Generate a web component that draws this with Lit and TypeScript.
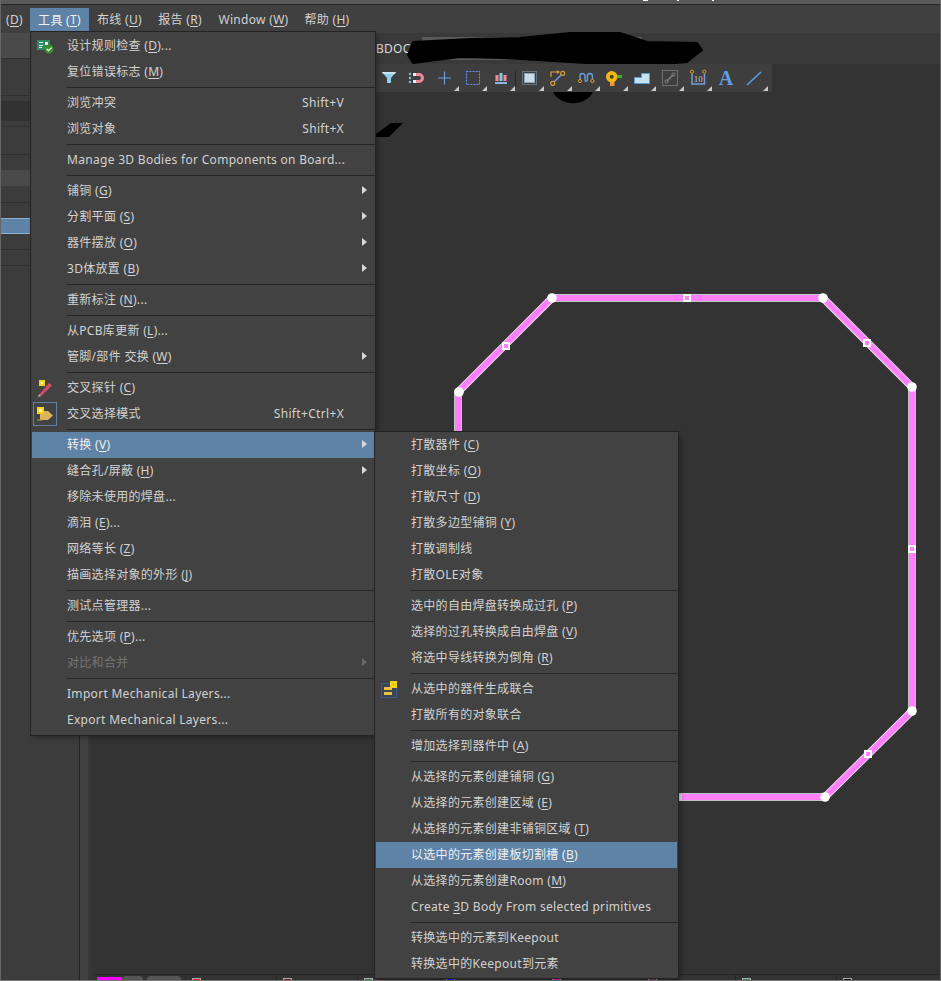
import { LitElement, html, css, svg } from 'lit';
import { customElement } from 'lit/decorators.js';

type Entry = {
  t?: string;
  key?: string;
  bare?: boolean;
  tail?: string;
  sc?: string;
  sub?: boolean;
  dis?: boolean;
  hi?: boolean;
  icon?: string;
  sep?: boolean;
};

const S: Entry = { sep: true };

const mainMenu: Entry[] = [
  { t: '设计规则检查 ', key: 'D', tail: '...', icon: 'drc' },
  { t: '复位错误标志 ', key: 'M' },
  S,
  { t: '浏览冲突', sc: 'Shift+V' },
  { t: '浏览对象', sc: 'Shift+X' },
  S,
  { t: 'Manage 3D Bodies for Components on Board...' },
  S,
  { t: '铺铜 ', key: 'G', sub: true },
  { t: '分割平面 ', key: 'S', sub: true },
  { t: '器件摆放 ', key: 'O', sub: true },
  { t: '3D体放置 ', key: 'B', sub: true },
  S,
  { t: '重新标注 ', key: 'N', tail: '...' },
  S,
  { t: '从PCB库更新 ', key: 'L', tail: '...' },
  { t: '管脚/部件 交换 ', key: 'W', sub: true },
  S,
  { t: '交叉探针 ', key: 'C', icon: 'probe' },
  { t: '交叉选择模式', sc: 'Shift+Ctrl+X', icon: 'cross' },
  S,
  { t: '转换 ', key: 'V', sub: true, hi: true },
  { t: '缝合孔/屏蔽 ', key: 'H', sub: true },
  { t: '移除未使用的焊盘...' },
  { t: '滴泪 ', key: 'E', tail: '...' },
  { t: '网络等长 ', key: 'Z' },
  { t: '描画选择对象的外形 ', key: 'J' },
  S,
  { t: '测试点管理器...' },
  S,
  { t: '优先选项 ', key: 'P', tail: '...' },
  { t: '对比和合并', sub: true, dis: true },
  S,
  { t: 'Import Mechanical Layers...' },
  { t: 'Export Mechanical Layers...' },
];

const subMenu: Entry[] = [
  { t: '打散器件 ', key: 'C' },
  { t: '打散坐标 ', key: 'O' },
  { t: '打散尺寸 ', key: 'D' },
  { t: '打散多边型铺铜 ', key: 'Y' },
  { t: '打散调制线' },
  { t: '打散OLE对象' },
  S,
  { t: '选中的自由焊盘转换成过孔 ', key: 'P' },
  { t: '选择的过孔转换成自由焊盘 ', key: 'V' },
  { t: '将选中导线转换为倒角 ', key: 'R' },
  S,
  { t: '从选中的器件生成联合', icon: 'union' },
  { t: '打散所有的对象联合' },
  S,
  { t: '增加选择到器件中 ', key: 'A' },
  S,
  { t: '从选择的元素创建铺铜 ', key: 'G' },
  { t: '从选择的元素创建区域 ', key: 'E' },
  { t: '从选择的元素创建非铺铜区域 ', key: 'T' },
  { t: '以选中的元素创建板切割槽 ', key: 'B', hi: true },
  { t: '从选择的元素创建Room ', key: 'M' },
  { t: 'Create ', key: '3', bare: true, tail: 'D Body From selected primitives' },
  S,
  { t: '转换选中的元素到Keepout' },
  { t: '转换选中的Keepout到元素' },
];

const menuBar = [
  { t: '工具 ', key: 'T', w: 59, on: true },
  { t: '布线 ', key: 'U', w: 61 },
  { t: '报告 ', key: 'R', w: 60 },
  { t: 'Window ', key: 'W', w: 87 },
  { t: '帮助 ', key: 'H', w: 60 },
];

// rows of the cut-off panel on the left, heights in px
const panelRows = [
  { h: 26, c: 'lt' },
  { h: 37, c: '' },
  { h: 5, c: 'flat' },
  { h: 20, c: 'dk' },
  { h: 6, c: '' },
  { h: 28, c: '' },
  { h: 15, c: 'flat' },
  { h: 16, c: 'lt flat' },
  { h: 17, c: '' },
  { h: 15, c: 'flat' },
  { h: 16, c: 'sel' },
  { h: 16, c: '' },
  { h: 16, c: '' },
];

const layers = [
  { c: '#f01c14', t: '[1] Top Layer', w: 91 },
  { c: '#8c1a1a', t: '[2] GND02', w: 81 },
  { c: '#1d9a2a', t: '[3] PWR03', w: 82 },
  { c: '#2222dd', t: '[4] Bottom Layer', w: 106 },
  { c: '#e21fd0', t: 'Mechanical 1', w: 96 },
  { c: '#8e1f9c', t: 'Mechanical 13', w: 94 },
  { c: '#1c9a2f', t: 'Mechanical 15', w: 101 },
  { c: '#111111', t: 'Mechanical 16', w: 99 },
];

// small corner triangle used on toolbar buttons with a dropdown
const drop = svg`<path d="M28 27h-5l5-5z" fill="#c8c8c8"/>`;

const tools1 = [
  svg`<path d="M7 8h14l-5 6v5h-4v-5z" fill="#8fd0ee"/><path d="M7 8h14l-1 2H8z" fill="#c6e8f6"/>`,
  svg`<path d="M11 9h5a5 5 0 0 1 0 10h-5v-3h5a2 2 0 0 0 0-4h-5z" fill="#ee8a96"/><path d="M10 9h3v3h-3zM10 16h3v3h-3z" fill="#e6edf2"/><circle cx="7" cy="10" r="1.200" fill="#8db8c8"/><circle cx="7" cy="14" r="1.200" fill="#8db8c8"/><circle cx="7" cy="18" r="1.200" fill="#8db8c8"/>`,
  svg`<path d="M13.500 7.500v13M7 14h13" stroke="#6c9ee0" stroke-width="1.100" fill="none"/>${drop}`,
  svg`<rect x="7.500" y="7.500" width="13" height="13" fill="none" stroke="#5f8fe8" stroke-width="1.100" stroke-dasharray="2 1"/>${drop}`,
  svg`<path d="M8.500 11h3v6h-3zM16.500 11h3v6h-3z" fill="#ee8d96"/><path d="M12.500 9h3v8h-3z" fill="#8cc4e8"/><path d="M8 18h12v2H8z" fill="#8cb4e0"/>${drop}`,
];

const tools2 = [
  svg`<rect x="8.500" y="9.500" width="10" height="9" fill="#c9dbe6" stroke="#8fa7b8"/><rect x="6.500" y="7.500" width="14" height="13" fill="none" stroke="#8fa7b8" stroke-dasharray="1 1"/>${drop}`,
  svg`<path d="M7 13V8h7" fill="none" stroke="#e0a030" stroke-width="1.200"/><path d="M13 6l3 2-3 2z" fill="#e0a030"/><path d="M10 18l7-7" stroke="#6c9ee0" stroke-width="1.400"/><circle cx="8.700" cy="19.300" r="2" fill="none" stroke="#d9a030" stroke-width="1.200"/><circle cx="18.700" cy="9.300" r="2" fill="none" stroke="#d9a030" stroke-width="1.200"/>${drop}`,
  svg`<path d="M8 15v-3a2.500 2.500 0 0 1 5 0v4a1.200 1.200 0 0 0 2.400 0v-4a2.500 2.500 0 0 1 5 0v3" fill="none" stroke="#6c9ee0" stroke-width="1.400"/><circle cx="8" cy="17" r="1.600" fill="none" stroke="#d9a030"/><circle cx="20.400" cy="17" r="1.600" fill="none" stroke="#d9a030"/>${drop}`,
  svg`<path d="M10 16h4.500v6H10z" fill="#e79a3a"/><circle cx="11.700" cy="12.700" r="5.700" fill="#f2b90f"/><circle cx="11.700" cy="12.700" r="2" fill="#4a4028"/><path d="M17 11h5v3h-5z" fill="#3fae3f"/>${drop}`,
  svg`<path d="M6.500 19.500v-6h7v-4h8v10z" fill="#c6e2f2" stroke="#5a9fd4"/>${drop}`,
  svg`<rect x="6.500" y="6.500" width="15" height="15" fill="none" stroke="#707070"/><path d="M11 17l6-6" stroke="#7c7c7c" stroke-width="1.600"/><circle cx="10.500" cy="17.500" r="1.500" fill="none" stroke="#888"/><circle cx="17.500" cy="10.500" r="1.500" fill="none" stroke="#888"/>${drop}`,
  svg`<path d="M8 10v10h12.500V10" fill="none" stroke="#6f9fd8" stroke-width="1.500"/><circle cx="8" cy="7.700" r="1.600" fill="none" stroke="#d9a030"/><circle cx="20.300" cy="7.700" r="1.600" fill="none" stroke="#d9a030"/><text x="14.200" y="18" font-size="9" text-anchor="middle" fill="#c8c8c8" letter-spacing="0" font-family="Liberation Serif">10</text>${drop}`,
  svg`<text x="14" y="21" font-size="20" text-anchor="middle" fill="#5f9fe0" font-weight="700" letter-spacing="0" font-family="Liberation Serif">A</text>`,
  svg`<path d="M7 21L21 8" stroke="#5d9be0" stroke-width="1.700"/>${drop}`,
];

const menuIcon: Record<string, unknown> = {
  drc: svg`<path d="M0 2h13v10H0z" fill="#2e8b63"/><path d="M2 4h4v1H2zM2 7h4v1H2zM2 9h3v1H2zM8 4h3v3H8z" fill="#e8f0e8"/><circle cx="12" cy="11" r="4.500" fill="#3a8f2a"/><path d="M9.800 11l1.700 1.700 3-3" stroke="#fff" stroke-width="1.200" fill="none"/>`,
  probe: svg`<path d="M2 15L12 3l3 2.500L4 16z" fill="#d84a6a"/><path d="M1 17l1-3 2 2z" fill="#b5b5b5"/><path d="M2 0h6v6H2z" fill="#f5d21e"/><path d="M4 2h2v2H4z" fill="#fff7b0"/>`,
  cross: svg`<path d="M3 5h8l5 4.500-5 4.500H3z" fill="#d9b45a"/><path d="M0 14h5" stroke="#c0a040"/><path d="M0 1h7v7H0z" fill="#f5d21e"/><path d="M2 3h3v3H2z" fill="#fff7b0"/>`,
  union: svg`<rect x="0.500" y="2.500" width="15" height="14" fill="#3a4552" stroke="#3a5a88"/><path d="M3 6h8v3H3zM3 11h8v3H3z" fill="#f0c040"/><path d="M9 0h7v7H9z" fill="#f5d21e"/><path d="M12 2h1v3h-1z" fill="#d8a020"/>`,
};

const cornerPts = [
  [552, 298],
  [823, 298],
  [459, 392],
  [912, 387],
  [912, 711],
  [825, 797],
];
const midPts = [
  [687, 298],
  [867, 343],
  [506, 346],
  [912, 549],
  [868, 754],
];
const outline = 'M458 440V392L552 298H823L912 387V711L825 797H670';

@customElement('pcb-menu')
export class PcbMenu extends LitElement {
  static properties = { items: { attribute: false } };
  items: Entry[] = [];

  static styles = css`
    :host {
      display: block;
      background: #424242;
      box-shadow: 0 0 0 1px #232323, 3px 3px 5px rgba(0, 0, 0, 0.3);
    }
    .row {
      height: 26px;
      box-sizing: border-box;
      display: flex;
      align-items: center;
      padding: 0 12px 2px 36px;
      position: relative;
      color: #d2d2d2;
      white-space: pre;
    }
    .row.hi {
      margin: 0 1px;
      padding-left: 35px;
      padding-right: 11px;
      background: #5f83a6;
      color: #f0f0f0;
    }
    .row.dis {
      color: #757575;
    }
    .label {
      flex: 1;
    }
    .key {
      text-decoration: underline;
      text-underline-offset: 2px;
    }
    .sc {
      margin-right: 19px;
      letter-spacing: 0.33px;
    }
    .arrow {
      width: 0;
      height: 0;
      border-left: 5px solid #d8d8d8;
      border-top: 4px solid transparent;
      border-bottom: 4px solid transparent;
      margin-right: -4px;
    }
    .dis .arrow {
      border-left-color: #6a6a6a;
    }
    .sep {
      height: 5px;
      display: flex;
      align-items: center;
      padding-left: 36px;
    }
    .sep i {
      flex: 1;
      height: 1px;
      background: #262626;
    }
    .ico {
      position: absolute;
      left: 6px;
      top: 5px;
      width: 18px;
      height: 17px;
    }
    .box {
      position: absolute;
      left: 2px;
      top: 1px;
      width: 24px;
      height: 24px;
      border: 1px solid #5f83a6;
      box-sizing: border-box;
    }
  `;

  render() {
    return this.items.map((e) => {
      if (e.sep) return html`<div class="sep"><i></i></div>`;
      const cls = 'row' + (e.hi ? ' hi' : '') + (e.dis ? ' dis' : '');
      const key = e.key ? html`<span class="key">${e.key}</span>` : '';
      return html`<div class=${cls}>
        ${e.icon === 'cross' ? html`<span class="box"></span>` : ''}
        ${e.icon ? html`<svg class="ico" viewBox="0 0 18 17">${menuIcon[e.icon]}</svg>` : ''}
        <span class="label">${e.t}${e.key && !e.bare ? html`(${key})` : key}${e.tail ?? ''}</span>
        ${e.sc ? html`<span class="sc">${e.sc}</span>` : ''}
        ${e.sub ? html`<span class="arrow"></span>` : ''}
      </div>`;
    });
  }
}

@customElement('app-root')
export class AppRoot extends LitElement {
  static styles = css`
    :host {
      display: block;
      width: 941px;
      height: 981px;
      overflow: hidden;
      position: relative;
      background: #333333;
      font-family: 'Noto Sans', 'Noto Sans CJK SC', sans-serif;
      font-size: 12px;
      letter-spacing: 0.3px;
      color: #d2d2d2;
    }
    .frame {
      height: 981px;
      box-sizing: border-box;
      display: flex;
      flex-direction: column;
      border-left: 1px solid #666;
      border-right: 1px solid #666;
      border-bottom: 1px solid #777;
    }
    .title {
      height: 4px;
      flex: none;
      background: #5a5a5a;
      border-bottom: 1px solid #262626;
    }
    .menubar {
      height: 28px;
      flex: none;
      background: #404040;
      display: flex;
      align-items: stretch;
      padding-left: 5px;
      white-space: pre;
    }
    .menubar .item {
      display: flex;
      align-items: center;
      justify-content: center;
      flex: none;
    }
    .menubar .d {
      width: 24px;
      justify-content: flex-start;
    }
    .menubar .on {
      background: #5f83a6;
      color: #f0f0f0;
      margin: 3px 0 2px;
    }
    .key {
      text-decoration: underline;
      text-underline-offset: 2px;
    }
    .work {
      flex: 1;
      display: flex;
      min-height: 0;
    }
    .panel {
      width: 79px;
      flex: none;
      background: #3c3c3c;
      border-right: 1px solid #222;
      box-sizing: border-box;
      display: flex;
      flex-direction: column;
    }
    .panel i {
      display: block;
      flex: none;
      box-sizing: border-box;
      border-bottom: 1px solid #303030;
    }
    .panel i.flat {
      border-bottom: 0;
    }
    .panel i.lt {
      background: #4a4a4a;
    }
    .panel i.dk {
      background: #323232;
    }
    .panel i.sel {
      background: #5f83a6;
      border-top: 1px solid #8fb0cc;
      border-bottom: 1px solid #8fb0cc;
    }
    .right {
      flex: 1;
      min-width: 0;
      display: flex;
      flex-direction: column;
    }
    .doc-strip {
      height: 31px;
      flex: none;
      background: #393939;
      display: flex;
      align-items: center;
      padding-left: 288px;
      color: #d8d8d8;
    }
    .body {
      flex: 1;
      min-height: 0;
      display: flex;
    }
    .rail {
      width: 8px;
      flex: none;
      background: #414141;
    }
    .canvas {
      flex: 1;
      min-width: 0;
      background: linear-gradient(to right, #383838, #333333 5px);
      display: flex;
      flex-direction: column;
    }
    .space {
      flex: 1;
    }
    .layers {
      height: 6px;
      flex: none;
      display: flex;
      margin-left: 6px;
      padding-left: 3px;
      box-sizing: border-box;
      border-top: 1px solid #262626;
      overflow: hidden;
      font-size: 11px;
      line-height: 11px;
      white-space: nowrap;
    }
    .swatch {
      width: 25px;
      margin-top: 2px;
      background: #ff00ff;
      flex: none;
    }
    .ltab {
      flex: none;
      height: 8px;
      margin-top: 1px;
      background: #555;
      border-radius: 4px 4px 0 0;
    }
    .cell {
      flex: none;
      box-sizing: border-box;
      border-left: 1px solid #262626;
      padding: 3px 0 0 6px;
      display: flex;
      gap: 8px;
    }
    .cell b {
      width: 9px;
      height: 9px;
      box-sizing: border-box;
      border: 1px solid #aaa;
      flex: none;
    }
    .cell span {
      margin-top: 1px;
    }
    .tb {
      position: absolute;
      left: 375px;
      top: 64px;
      height: 28px;
      width: 397px;
      display: flex;
      align-items: center;
      background: #3e3e3e;
      border-radius: 2px;
    }
    .tb svg {
      width: 28px;
      height: 28px;
      flex: none;
    }
    .tb b {
      width: 1px;
      height: 15px;
      background: #262626;
      flex: none;
    }
    .ink {
      position: absolute;
      left: 0;
      top: 0;
      width: 941px;
      height: 981px;
      pointer-events: none;
    }
    .menu-a {
      position: absolute;
      left: 31px;
      top: 32px;
      width: 344px;
      padding: 1px 0 2px;
    }
    .menu-b {
      position: absolute;
      left: 375px;
      top: 432px;
      width: 303px;
      padding-bottom: 1px;
    }
  `;

  render() {
    return html`
      <div class="frame">
        <div class="title"></div>
        <div class="menubar">
          <span class="item d">(<span class="key">D</span>)</span>
          ${menuBar.map(
            (m) => html`<span class="item ${m.on ? 'on' : ''}" style="width:${m.w}px"
              >${m.t}(<span class="key">${m.key}</span>)</span
            >`,
          )}
        </div>
        <div class="work">
          <div class="panel">
            ${panelRows.map((r) => html`<i class=${r.c} style="height:${r.h}px"></i>`)}
          </div>
          <div class="right">
            <div class="doc-strip">CBDOC</div>
            <div class="body">
              <div class="rail"></div>
              <div class="canvas">
                <div class="space"></div>
                <div class="layers">
                  <span class="swatch"></span>
                  <span class="ltab" style="width:21px"></span>
                  <span class="ltab" style="width:34px;margin-left:4px;margin-right:4px"></span>
                  ${layers.map(
                    (l) => html`<div class="cell" style="width:${l.w}px">
                      <b style="background:${l.c}"></b><span>${l.t}</span>
                    </div>`,
                  )}
                </div>
              </div>
            </div>
          </div>
        </div>
      </div>
      <svg class="ink" viewBox="0 0 941 981">
        <path d="M643 0h5v1h-5zM677 0h2v1h-2zM712 0h2v1h-2z" fill="#fff"/>
        <rect x="422" y="37" width="220" height="23" fill="#5a5a5a"/>
        <path d="M408 55L413 42L470 39L520 38L570 33L620 33L647 42L697 43L702 50L687 62L653 65L587 63L503 58L460 57L413 63z" fill="#000" stroke="#000" stroke-width="2" stroke-linejoin="round"/>
        <path d="M553 92c8 15 32 15 40 0z" fill="#000"/>
        <path d="M391 123h12l-14 14h-13v-3z" fill="#000"/>
      </svg>
      <svg class="ink" viewBox="0 0 941 981">
        <path d=${outline} fill="none" stroke="#f4f4f4" stroke-width="7.500"/>
        <path d=${outline} fill="none" stroke="#ff80ff" stroke-width="6"/>
        <rect x="679" y="794" width="3" height="7" fill="#dddddd"/>
        ${cornerPts.map(([x, y]) => svg`<circle cx=${x} cy=${y} r="4.800" fill="#fff"/>`)}
        ${midPts.map(
          ([x, y]) =>
            svg`<rect x=${x - 3} y=${y - 3} width="6" height="6" fill="#ff80ff" stroke="#fff" stroke-width="2"/>`,
        )}
      </svg>
      <div class="tb">
        ${tools1.map((p) => html`<svg viewBox="0 0 28 28">${p}</svg>`)}
        <b></b>
        ${tools2.map((p) => html`<svg viewBox="0 0 28 28">${p}</svg>`)}
      </div>
      <pcb-menu class="menu-a" .items=${mainMenu}></pcb-menu>
      <pcb-menu class="menu-b" .items=${subMenu}></pcb-menu>
    `;
  }
}
